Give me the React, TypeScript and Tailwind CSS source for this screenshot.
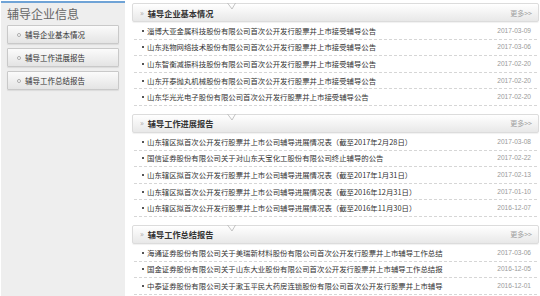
import React from "react";

type Item = { title: string; date: string };
type Section = { name: string; items: Item[] };

const sections: Section[] = [
  {
    name: "辅导企业基本情况",
    items: [
      { title: "淄博大亚金属科技股份有限公司首次公开发行股票并上市接受辅导公告", date: "2017-03-09" },
      { title: "山东兆物网络技术股份有限公司首次公开发行股票并上市接受辅导公告", date: "2017-03-06" },
      { title: "山东智衡减振科技股份有限公司首次公开发行股票并上市接受辅导公告", date: "2017-02-20" },
      { title: "山东开泰抛丸机械股份有限公司首次公开发行股票并上市接受辅导公告", date: "2017-02-20" },
      { title: "山东华光光电子股份有限公司首次公开发行股票并上市接受辅导公告", date: "2017-02-20" },
    ],
  },
  {
    name: "辅导工作进展报告",
    items: [
      { title: "山东辖区拟首次公开发行股票并上市公司辅导进展情况表（截至2017年2月28日）", date: "2017-03-08" },
      { title: "国信证券股份有限公司关于对山东天宝化工股份有限公司终止辅导的公告", date: "2017-02-22" },
      { title: "山东辖区拟首次公开发行股票并上市公司辅导进展情况表（截至2017年1月31日）", date: "2017-02-13" },
      { title: "山东辖区拟首次公开发行股票并上市公司辅导进展情况表（截至2016年12月31日）", date: "2017-01-10" },
      { title: "山东辖区拟首次公开发行股票并上市公司辅导进展情况表（截至2016年11月30日）", date: "2016-12-07" },
    ],
  },
  {
    name: "辅导工作总结报告",
    items: [
      { title: "海通证券股份有限公司关于美瑞新材料股份有限公司首次公开发行股票并上市辅导工作总结", date: "2017-03-06" },
      { title: "国金证券股份有限公司关于山东大业股份有限公司首次公开发行股票并上市辅导工作总结报", date: "2016-12-05" },
      { title: "中泰证券股份有限公司关于漱玉平民大药房连锁股份有限公司首次公开发行股票并上市辅导", date: "2016-12-01" },
    ],
  },
];

const menu = ["辅导企业基本情况", "辅导工作进展报告", "辅导工作总结报告"];

const font = { fontFamily: "'Noto Sans CJK SC', 'Noto Sans', sans-serif" };

function SectionBlock({ section }: { section: Section }) {
  return (
    <div className="mb-[8px]">
      <div className="relative flex h-[19px] items-center rounded-[2px] border border-[#dcdcdc] bg-gradient-to-b from-[#ffffff] to-[#e8e8e8] pl-[7px] pr-[6px] shadow-[0_1px_1px_rgba(0,0,0,0.06)]">
        <span className="mr-[4px] text-[8px] leading-[12px] text-[#aaa]">»</span>
        <span className="text-[8.2px] font-bold leading-[12px] text-[#333]">{section.name}</span>
        <svg className="absolute left-[94px] top-[-1px]" width="9" height="8" viewBox="0 0 9 8">
          <polyline points="0.5,0 5,6 8.5,0" fill="none" stroke="#b5b5b5" strokeWidth="0.8" />
        </svg>
        <span className="ml-auto text-[7px] leading-[12px] text-[#a0a0a0]">更多&gt;&gt;</span>
      </div>
      <ul className="mt-[1px] px-[2px]">
        {section.items.map((it, i) => (
          <li
            key={i}
            className="flex h-[16.6px] items-center border-b border-dashed border-[#d6d6d6] pl-[8px] pr-[6px]"
          >
            <span className="mr-[3px] h-[2px] w-[2px] shrink-0 bg-[#555]" />
            <span className="whitespace-nowrap text-[7.4px] leading-[12px] text-[#333]">{it.title}</span>
            <span
              className="ml-auto shrink-0 pl-[8px] text-[6.6px] leading-[12px] text-[#999]"
              style={{ fontFamily: "'Liberation Sans', sans-serif" }}
            >
              {it.date}
            </span>
          </li>
        ))}
      </ul>
    </div>
  );
}

export default function App() {
  return (
    <div className="flex h-[296px] w-[540px] overflow-hidden bg-white" style={font}>
      <aside className="ml-[1px] mt-[1px] w-[124px] shrink-0 border-t-2 border-[#6fa3d6] bg-[#eeeeee]">
        <h2 className="pl-[6px] pt-[3px] text-[12px] leading-[16px] text-[#666]">辅导企业信息</h2>
        <nav className="mt-[3px] flex flex-col gap-[4px] pl-[6px] pr-[6px]">
          {menu.map((m) => (
            <div
              key={m}
              className="flex h-[19px] items-center rounded-[1px] border border-[#c9c9c9] bg-gradient-to-b from-[#fbfbfb] to-[#e4e4e4] pl-[9px] shadow-[0_1px_1px_rgba(0,0,0,0.08)]"
            >
              <span className="mr-[4px] h-[4px] w-[4px] rounded-full border border-[#aaa] bg-white" />
              <span className="text-[7.5px] leading-[12px] text-[#333]">{m}</span>
            </div>
          ))}
        </nav>
      </aside>
      <main className="ml-[7px] flex-1 pr-[1px] pt-[3px]">
        {sections.map((s) => (
          <SectionBlock key={s.name} section={s} />
        ))}
      </main>
    </div>
  );
}
